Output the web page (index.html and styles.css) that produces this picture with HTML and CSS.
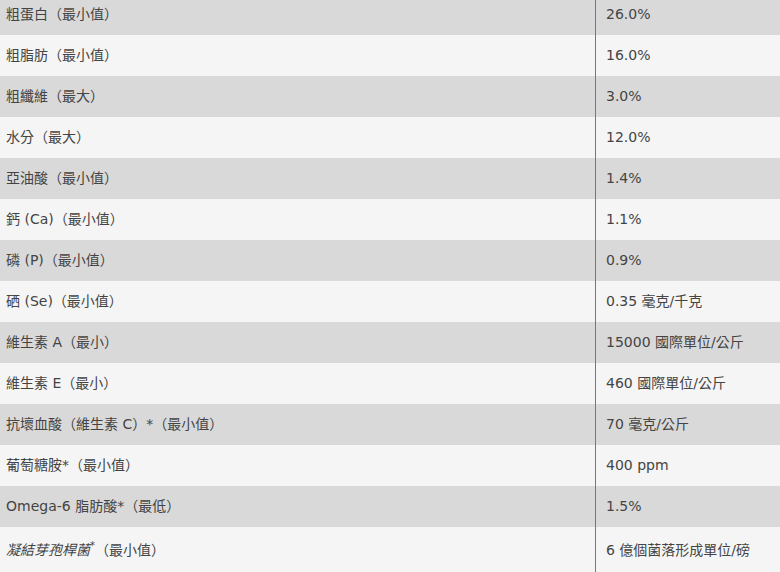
FILE: index.html
```html
<!DOCTYPE html>
<html lang="zh-Hant">
<head>
<meta charset="utf-8">
<link rel="stylesheet" href="styles.css">
</head>
<body>
<table class="analysis">
  <tbody>
    <tr><td class="name">粗蛋白（最小值）</td><td class="val">26.0%</td></tr>
    <tr><td class="name">粗脂肪（最小值）</td><td class="val">16.0%</td></tr>
    <tr><td class="name">粗纖維（最大）</td><td class="val">3.0%</td></tr>
    <tr><td class="name">水分（最大）</td><td class="val">12.0%</td></tr>
    <tr><td class="name">亞油酸（最小值）</td><td class="val">1.4%</td></tr>
    <tr><td class="name">鈣 (Ca)（最小值）</td><td class="val">1.1%</td></tr>
    <tr><td class="name">磷 (P)（最小值）</td><td class="val">0.9%</td></tr>
    <tr><td class="name">硒 (Se)（最小值）</td><td class="val">0.35 毫克/千克</td></tr>
    <tr><td class="name">維生素 A（最小）</td><td class="val">15000 國際單位/公斤</td></tr>
    <tr><td class="name">維生素 E（最小）</td><td class="val">460 國際單位/公斤</td></tr>
    <tr><td class="name">抗壞血酸（維生素 C）*（最小值）</td><td class="val">70 毫克/公斤</td></tr>
    <tr><td class="name">葡萄糖胺*（最小值）</td><td class="val">400 ppm</td></tr>
    <tr><td class="name">Omega-6 脂肪酸*（最低）</td><td class="val">1.5%</td></tr>
    <tr class="last"><td class="name"><em>凝結芽孢桿菌</em><sup>*</sup>（最小值）</td><td class="val">6 億個菌落形成單位/磅</td></tr>
  </tbody>
</table>
</body>
</html>
```

FILE: styles.css
```css
html, body {
  margin: 0;
  padding: 0;
  background: #f5f5f5;
}
body {
  font-family: "DejaVu Sans", "Noto Sans CJK TC", sans-serif;
  font-size: 14px;
  color: #444;
}
.analysis {
  width: 780px;
  border-collapse: collapse;
  margin-top: -6px;
}
.analysis tr {
  height: 41px;
}
.analysis tr:nth-child(odd) {
  background: #d9d9d9;
}
.analysis tr:nth-child(even) {
  background: #f5f5f5;
}
.analysis tr.last {
  height: 47px;
}
.analysis td {
  padding: 0 0 2px 0;
  vertical-align: middle;
  line-height: 20px;
}
.name {
  width: 589px;
  padding-left: 6px !important;
  border-right: 1px solid #777;
}
.val {
  padding-left: 10px !important;
}
.name em {
  font-style: italic;
}
.name sup {
  font-size: 10px;
  line-height: 0;
  vertical-align: 6px;
}
```
